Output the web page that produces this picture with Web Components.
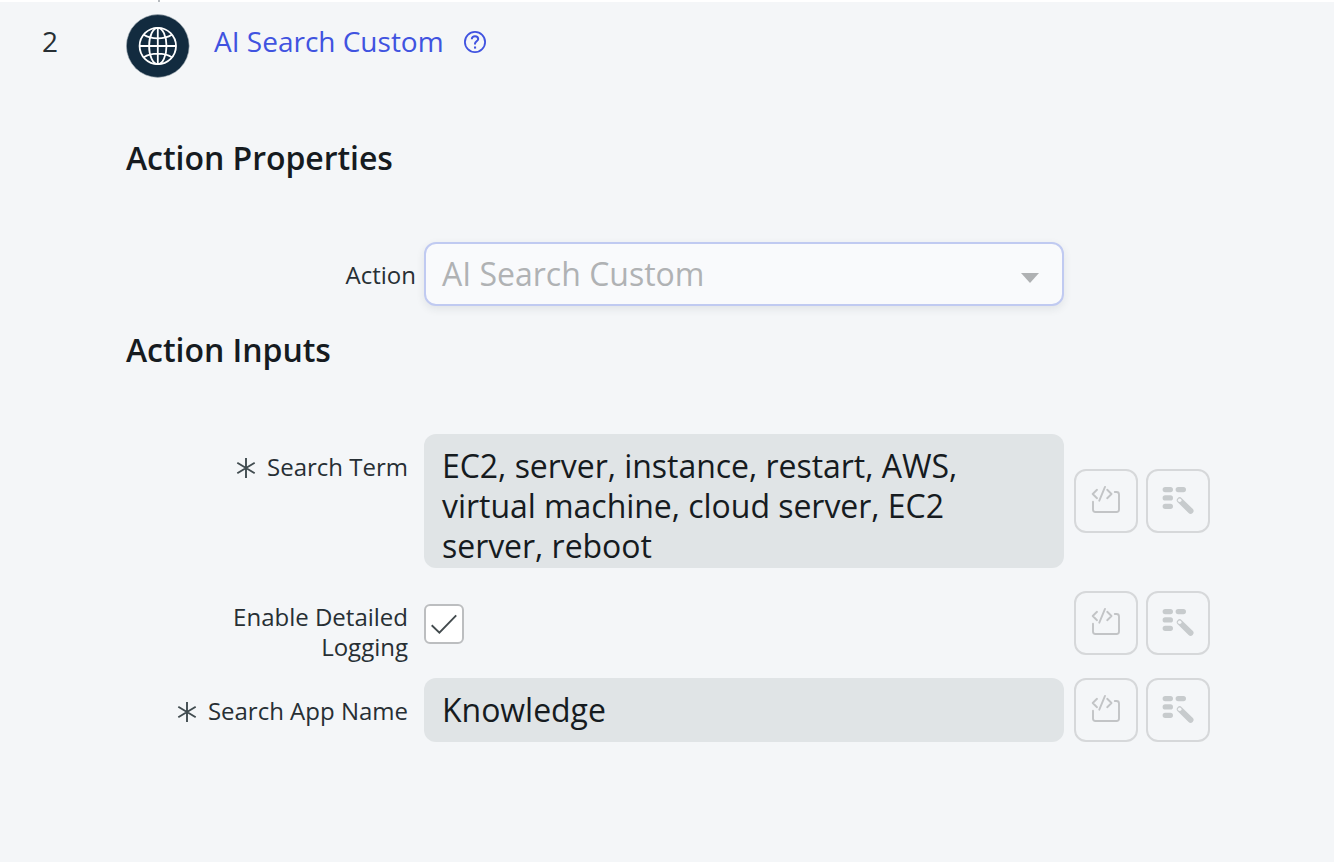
<!DOCTYPE html>
<html lang="en">
<head>
<meta charset="utf-8">
<title>AI Search Custom</title>
<style>
html,body{margin:0;height:100%;background:#f4f6f8}
body{font-family:"Open Sans","Noto Sans",sans-serif;color:#272f34;overflow:hidden}
</style>
</head>
<body>
<action-step></action-step>
<script>
const define = (name, html) => customElements.define(name, class extends HTMLElement {
  constructor() {
    super();
    const t = document.createElement('template');
    t.innerHTML = html;
    this.attachShadow({mode: 'open'}).append(t.content.cloneNode(true));
  }
});

define('globe-badge', `
<style>:host{display:block;width:64px;height:64px}svg{display:block}</style>
<svg width="64" height="64" viewBox="0 0 64 64" fill="none" stroke="#fff" stroke-width="1.8">
<circle cx="31.800" cy="32" r="31.4" fill="#122b3f" stroke="#a9b3ba" stroke-width=".6"/>
<g transform="translate(-.2 0)"><circle cx="32" cy="32" r="18.2"/>
<ellipse cx="32" cy="32" rx="8.7" ry="18.2"/>
<path d="M32 13.8v36.4M13.8 32h36.4M18 20.7c7.5 4.800 20.500 4.800 28 0M18 43.300c7.500-4.800 20.500-4.800 28 0"/></g>
</svg>`);

define('help-icon', `
<style>:host{display:block}svg{display:block}</style>
<svg width="24" height="24" viewBox="0 0 24 24" fill="none" stroke="#4053e0" stroke-width="1.8">
<circle cx="12" cy="12" r="10.1"/>
<path d="M8.800 9.300c0-2 1.400-3.100 3.200-3.100s3.200 1.100 3.200 2.800c0 2.200-3.200 2.500-3.200 4.800v.7" stroke-width="2"/>
<path d="M11 16.500h2.100v2.100H11z" fill="#4053e0" stroke="none"/>
</svg>`);

define('required-mark', `
<style>:host{display:inline-block;width:20px;height:20px;margin-right:11px;vertical-align:-2px}svg{display:block}</style>
<svg width="20" height="20" viewBox="0 0 20 20" fill="none" stroke="#414c50" stroke-width="1.900"><path d="M10 0v20M1.300 4.800l17.400 10.400M1.300 15.200L18.700 4.800"/></svg>`);

define('tool-button', `
<style>
:host{display:block;box-sizing:border-box;width:64px;height:64px;border:2px solid #d6d8da;border-radius:12px}
::slotted(svg){display:block;margin:-2px}
</style><slot></slot>`);

define('tool-pair', `
<style>:host{display:flex;gap:8px}svg{width:64px;height:64px}</style>
<tool-button><svg viewBox="0 0 64 64" fill="none" stroke="#c2c4c6" stroke-width="1.900" stroke-linecap="round" stroke-linejoin="round">
<path d="M23 20.800L18.700 25l4.300 4.200M31 17.900l-5.700 13.800M33.200 20.800l4.300 4.200-4.300 4.200M19 32.700v7.800a2.500 2.500 0 0 0 2.500 2.500h21a2.500 2.500 0 0 0 2.500-2.500V25.500a2.500 2.500 0 0 0-2.500-2.500h-1.700"/></svg></tool-button>
<tool-button><svg viewBox="0 0 64 64" fill="none" stroke="#c7cbcd" stroke-linecap="round">
<path d="M19.200 20.600h5.200M32.200 20.600h5.200M19.200 28.900h5.200M19.200 37.300h5.200" stroke-width="5.200"/>
<path d="M33.700 31.200L44.600 41.900" stroke-width="5.800"/><circle cx="33.700" cy="31.200" r="1.800" fill="#f4f6f8" stroke="none"/></svg></tool-button>`);

define('section-title', `
<style>:host{display:block;font-size:32px;line-height:44px;font-weight:600;color:#161b1f;letter-spacing:-.04px}</style><slot></slot>`);

define('form-row', `
<style>
:host{display:grid;grid-template-columns:408px 640px 136px;align-items:start}
.label{font-size:24px;line-height:30px;text-align:right;padding-top:var(--label-top,18px);margin-right:var(--label-shift,0)}
.field{margin-left:16px;width:640px}
.tools{margin-left:26px;padding-top:var(--tools-top,0)}
</style>
<div class="label"><slot name="label"></slot></div><div class="field"><slot></slot></div><div class="tools"><slot name="tools"></slot></div>`);

define('text-field', `
<style>
:host{display:block;box-sizing:border-box;width:640px;min-height:64px;padding:12px 18px;border-radius:12px;background:#e0e4e6;color:#161b1f;font-size:32px;line-height:40px;letter-spacing:-.04px;overflow:hidden}
</style><slot></slot>`);

define('select-field', `
<style>
:host{display:flex;align-items:center;justify-content:space-between;box-sizing:border-box;width:640px;height:64px;padding:0 23px 0 16px;border:2px solid #c0caf1;border-radius:12px;background:#f9fafc;box-shadow:0 3px 8px rgba(30,40,60,.09);color:#b0b2b4;font-size:32px;line-height:40px}
svg{display:block;margin-top:8px}
</style><slot></slot><svg width="18" height="10" viewBox="0 0 18 10"><path d="M0 0h18L9 10z" fill="#afb1b3"/></svg>`);

define('check-box', `
<style>:host{display:block;box-sizing:border-box;width:40px;height:40px;border:2px solid #bcbec0;border-radius:6px;background:#fff}svg{display:block;margin:-2px}</style>
<svg width="40" height="40" viewBox="0 0 40 40" fill="none" stroke="#434b4e" stroke-width="1.900"><path d="M7.700 21.200l7.700 7.400L32.200 11.400"/></svg>`);

define('step-header', `
<style>
:host{display:flex;height:75px;padding:12px 0 0 42px;box-sizing:content-box}
.num,.name{font-size:28px;line-height:38px;margin-top:8px}
.num{width:84px}
.name{margin-left:24px;color:#4053e0;white-space:nowrap}
help-icon{margin:16px 0 0 19px}
</style>
<div class="num"><slot name="number"></slot></div><globe-badge></globe-badge><div class="name"><slot></slot></div><help-icon></help-icon>`);

define('action-step', `
<style>
:host{display:block;height:862px;box-sizing:border-box;background:#f4f6f8;border-top:2px solid #fff;position:relative}
.connector{position:absolute;left:158px;top:-2px;width:2px;height:2px;background:#b8bcc0}
section-title{margin-left:126px}
.first{margin-top:47px}
.action{margin-top:62px;--label-shift:-8px}
.second{margin-top:22px}
.term{margin-top:62px;--tools-top:35px}
.term text-field{height:134px}
.logging{margin-top:23px;--label-top:11px}
.logging check-box{margin-top:13px}
.app{margin-top:16px}
</style>
<div class="connector"></div>
<step-header><span slot="number">2</span>AI Search Custom</step-header>
<section-title class="first">Action Properties</section-title>
<form-row class="action"><span slot="label">Action</span><select-field>AI Search Custom</select-field></form-row>
<section-title class="second">Action Inputs</section-title>
<form-row class="term"><span slot="label"><required-mark></required-mark>Search Term</span><text-field>EC2, server, instance, restart, AWS,<br>virtual machine, cloud server, EC2<br>server, reboot</text-field><tool-pair slot="tools"></tool-pair></form-row>
<form-row class="logging"><span slot="label">Enable Detailed<br>Logging</span><check-box></check-box><tool-pair slot="tools"></tool-pair></form-row>
<form-row class="app"><span slot="label"><required-mark></required-mark>Search App Name</span><text-field>Knowledge</text-field><tool-pair slot="tools"></tool-pair></form-row>`);
</script>
</body>
</html>
